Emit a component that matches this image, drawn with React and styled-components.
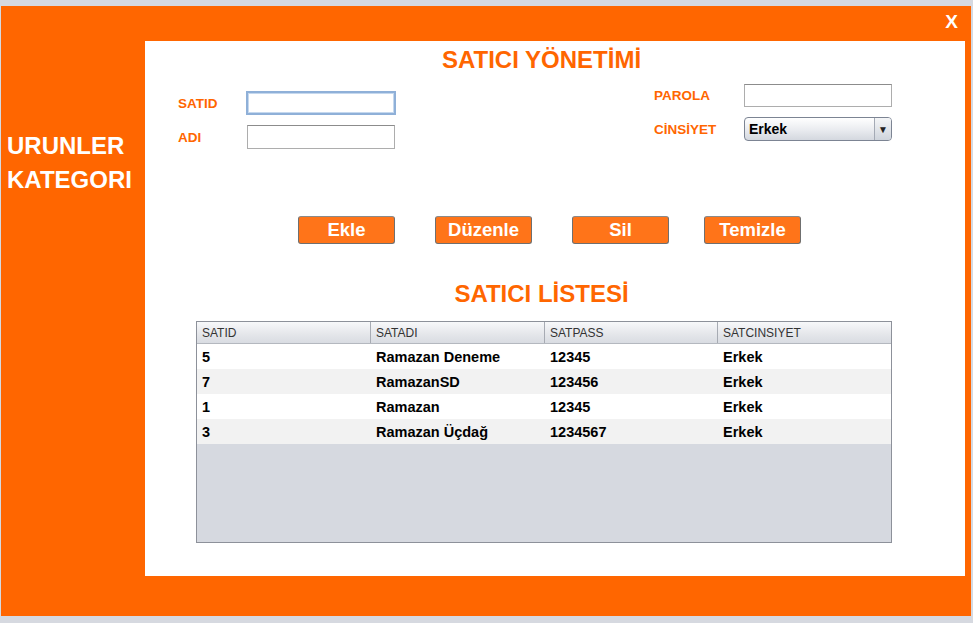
import React from 'react';
import styled, { createGlobalStyle } from 'styled-components';

const GlobalStyle = createGlobalStyle`
    body {
        margin: 0;
        background: #d6d9e0;
        font-family: "Liberation Sans", Arial, sans-serif;
    }
`;

const Frame = styled.div`
    margin: 6px 0 0 1px;
    width: 970px;
    height: 610px;
    background: #ff6600;
    display: flex;
    flex-direction: column;
`;

const TopBar = styled.div`
    height: 35px;
    display: flex;
    justify-content: flex-end;
    align-items: flex-start;
    padding: 5px 13px 0 0;
    box-sizing: border-box;
`;

const CloseButton = styled.span`
    color: #fff;
    font-weight: bold;
    font-size: 19px;
    line-height: 22px;
    cursor: pointer;
`;

const Body = styled.div`
    display: flex;
    height: 535px;
`;

const Sidebar = styled.div`
    width: 144px;
    padding: 88px 0 0 6px;
    box-sizing: border-box;
`;

const SideLink = styled.div`
    color: #fff;
    font-weight: bold;
    font-size: 24px;
    line-height: 34px;
`;

const Panel = styled.div`
    width: 820px;
    background: #fff;
    display: flex;
    flex-direction: column;
`;

const Title = styled.h2`
    margin: ${({ $top }) => $top}px 0 0 51px;
    width: 691px;
    text-align: center;
    color: #ff6600;
    font-size: 24px;
    line-height: 26px;
    font-weight: bold;
`;

const FormRow = styled.div`
    margin-top: 11px;
    padding: 0 72px 0 33px;
    display: flex;
    justify-content: space-between;
    align-items: flex-start;
`;

const FieldGrid = styled.div`
    display: grid;
    grid-template-columns: ${({ $labelWidth }) => $labelWidth}px 150px;
    row-gap: 10px;
    align-items: center;
    margin-top: ${({ $top }) => $top || 0}px;
`;

const Label = styled.label`
    color: #ff6600;
    font-weight: bold;
    font-size: 13.5px;
`;

const Input = styled.input`
    box-sizing: border-box;
    width: ${({ $w }) => $w || 148}px;
    height: ${({ $h }) => $h || 24}px;
    margin: 0 0 0 ${({ $offset }) => $offset || 0}px;
    padding: 0 4px;
    border: 1px solid #adadad;
    border-top-color: #8c8c8c;
    ${({ $focused }) => $focused && 'border: 2px solid #8fb0d8; box-shadow: inset 0 0 0 1px #c5d8ee;'}
    font-family: inherit;
    outline: none;
`;

const Select = styled.div`
    box-sizing: border-box;
    width: 148px;
    height: 24px;
    margin-left: 1px;
    border: 1px solid #7c8493;
    border-radius: 4px;
    background: linear-gradient(#ffffff, #e9ebef 55%, #d4d8df);
    display: flex;
    align-items: center;
    overflow: hidden;
`;

const SelectValue = styled.span`
    flex: 1;
    padding-left: 4px;
    font-weight: bold;
    font-size: 14px;
    color: #000;
`;

const SelectArrow = styled.span`
    width: 16px;
    height: 100%;
    border-left: 1px solid #a4aab5;
    background: linear-gradient(#f4f5f7, #cfd4dc);
    display: flex;
    align-items: center;
    justify-content: center;
    font-size: 10px;
    color: #222;
`;

const ButtonRow = styled.div`
    margin: 67px 0 0 153px;
    display: flex;
`;

const Button = styled.button`
    width: 97px;
    height: 28px;
    margin-left: ${({ $gap }) => $gap || 0}px;
    background: #ff7419;
    border: 1px solid #6f6f6f;
    border-top-color: #8a8a8a;
    border-radius: 3px;
    color: #fff;
    font-family: inherit;
    font-weight: bold;
    font-size: 18.5px;
    padding: 0;
`;

const Table = styled.div`
    margin: 14px 0 0 51px;
    width: 696px;
    height: 222px;
    box-sizing: border-box;
    border: 1px solid #8d919a;
    background: #d6d9e0;
    display: flex;
    flex-direction: column;
`;

const Row = styled.div`
    display: grid;
    grid-template-columns: 173px 174px 173px 1fr;
    height: ${({ $header }) => ($header ? 21 : 25)}px;
    background: ${({ $header, $alt }) =>
        $header ? 'linear-gradient(#f7f8fa, #e4e6ea 60%, #d9dce2)' : $alt ? '#f2f2f2' : '#fff'};
    ${({ $header }) => $header && 'border-bottom: 1px solid #b4b8bf;'}
`;

const HeadCell = styled.div`
    display: flex;
    align-items: center;
    padding-left: 5px;
    font-size: 12px;
    color: #333;
    border-left: ${({ $first }) => ($first ? 'none' : '1px solid #a7abb3')};
`;

const Cell = styled.div`
    display: flex;
    align-items: center;
    padding-left: ${({ $first }) => ($first ? 5 : 6)}px;
    font-size: 14.5px;
    font-weight: bold;
    color: #000;
`;

const columns = ['SATID', 'SATADI', 'SATPASS', 'SATCINSIYET'];

const sellers = [
    ['5', 'Ramazan Deneme', '12345', 'Erkek'],
    ['7', 'RamazanSD', '123456', 'Erkek'],
    ['1', 'Ramazan', '12345', 'Erkek'],
    ['3', 'Ramazan Üçdağ', '1234567', 'Erkek'],
];

const App = () => (
    <>
        <GlobalStyle />
        <Frame>
            <TopBar>
                <CloseButton>X</CloseButton>
            </TopBar>
            <Body>
                <Sidebar>
                    <SideLink>URUNLER</SideLink>
                    <SideLink>KATEGORI</SideLink>
                </Sidebar>
                <Panel>
                    <Title $top={6}>SATICI YÖNETİMİ</Title>
                    <FormRow>
                        <FieldGrid $labelWidth={68} $top={7}>
                            <Label>SATID</Label>
                            <Input $focused $w={150} />
                            <Label>ADI</Label>
                            <Input $offset={1} />
                        </FieldGrid>
                        <FieldGrid $labelWidth={89}>
                            <Label>PAROLA</Label>
                            <Input $h={23} $offset={1} />
                            <Label>CİNSİYET</Label>
                            <Select>
                                <SelectValue>Erkek</SelectValue>
                                <SelectArrow>▼</SelectArrow>
                            </Select>
                        </FieldGrid>
                    </FormRow>
                    <ButtonRow>
                        <Button>Ekle</Button>
                        <Button $gap={40}>Düzenle</Button>
                        <Button $gap={40}>Sil</Button>
                        <Button $gap={35}>Temizle</Button>
                    </ButtonRow>
                    <Title $top={37}>SATICI LİSTESİ</Title>
                    <Table>
                        <Row $header>
                            {columns.map((c, i) => (
                                <HeadCell key={c} $first={i === 0}>{c}</HeadCell>
                            ))}
                        </Row>
                        {sellers.map((s, r) => (
                            <Row key={s[0]} $alt={r % 2 === 1}>
                                {s.map((v, i) => (
                                    <Cell key={i} $first={i === 0}>{v}</Cell>
                                ))}
                            </Row>
                        ))}
                    </Table>
                </Panel>
            </Body>
        </Frame>
    </>
);

export default App;
